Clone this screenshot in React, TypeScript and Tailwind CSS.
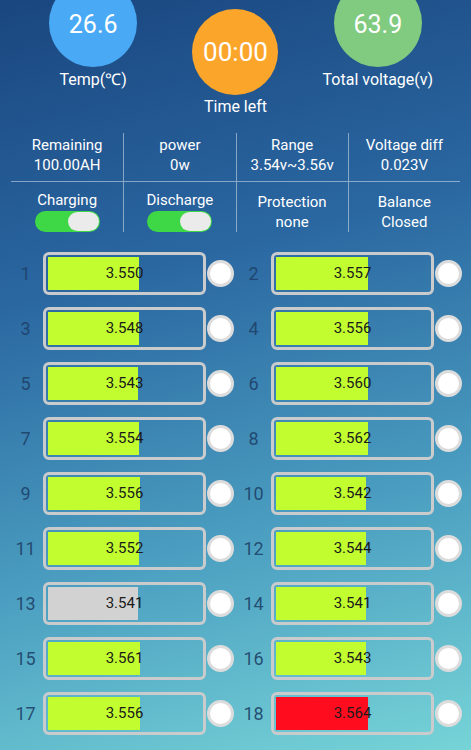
import React from "react";

const cells: { n: number; v: string; c?: string }[] = [
  { n: 1, v: "3.550" },
  { n: 2, v: "3.557" },
  { n: 3, v: "3.548" },
  { n: 4, v: "3.556" },
  { n: 5, v: "3.543" },
  { n: 6, v: "3.560" },
  { n: 7, v: "3.554" },
  { n: 8, v: "3.562" },
  { n: 9, v: "3.556" },
  { n: 10, v: "3.542" },
  { n: 11, v: "3.552" },
  { n: 12, v: "3.544" },
  { n: 13, v: "3.541", c: "gray" },
  { n: 14, v: "3.541" },
  { n: 15, v: "3.561" },
  { n: 16, v: "3.543" },
  { n: 17, v: "3.556" },
  { n: 18, v: "3.564", c: "red" },
];

function Toggle() {
  return (
    <div className="mt-[1px] flex h-[21px] w-[65px] items-center justify-end rounded-full bg-[#3ed846] pr-[1px]">
      <div className="h-[19px] w-[31px] rounded-full bg-[#ebebeb]" />
    </div>
  );
}

function Cell({ n, v, c }: { n: number; v: string; c?: string }) {
  const w = 90 + (parseFloat(v) - 3.541) * 100;
  const fill =
    c === "gray" ? "bg-[#d2d2d2]" : c === "red" ? "bg-[#ff0c1f]" : "bg-[#c2fd2f]";
  return (
    <div className="flex h-[43px] items-center">
      <div className="w-[35px] text-center text-[18px] leading-none text-[#1d4168]/90">{n}</div>
      <div className="relative h-[43px] w-[163px] rounded-[6px] border-[3px] border-[#c9cbcd] p-[2px]">
        <div className={`h-full ${fill}`} style={{ width: `${w}px` }} />
        <div className="absolute inset-0 flex items-center justify-center text-[15px] text-[#1a1a1a]">
          {v}
        </div>
      </div>
      <div className="ml-[1px] h-[27px] w-[27px] rounded-full border-[3px] border-[#dcdcdc] bg-white" />
    </div>
  );
}

export default function App() {
  const info = [
    ["Remaining", "100.00AH"],
    ["power", "0w"],
    ["Range", "3.54v~3.56v"],
    ["Voltage diff", "0.023V"],
  ];
  return (
    <div
      className="h-[750px] w-full overflow-hidden bg-[linear-gradient(165deg,#1a467f_0%,#2a67a1_35%,#4a9dc0_68%,#76d4d7_100%)] text-white"
      style={{ fontFamily: "Roboto, 'Liberation Sans', sans-serif" }}
    >
      {/* top circles */}
      <div className="grid h-[133px] grid-cols-3 px-[22px]">
        <div className="flex flex-col items-center">
          <div className="mt-[-21px] flex h-[88px] w-[88px] items-center justify-center rounded-full bg-[#49a9f5] pt-[4px] text-[25px]">
            26.6
          </div>
          <div className="mt-[3px] text-[16px] leading-[19px]">Temp(℃)</div>
        </div>
        <div className="flex flex-col items-center">
          <div className="mt-[9px] flex h-[86px] w-[86px] items-center justify-center rounded-full bg-[#fca52b] text-[26px]">
            00:00
          </div>
          <div className="mt-[2px] text-[16px] leading-[19px]">Time left</div>
        </div>
        <div className="flex flex-col items-center">
          <div className="mt-[-21px] flex h-[88px] w-[88px] items-center justify-center rounded-full bg-[#80cb7f] pt-[4px] text-[25px]">
            63.9
          </div>
          <div className="mt-[3px] text-[16px] leading-[19px]">Total voltage(v)</div>
        </div>
      </div>

      {/* info table */}
      <div className="mx-[11px]">
        <div className="grid h-[49px] grid-cols-4 border-b border-white/45">
          {info.map(([a, b], i) => (
            <div
              key={a}
              className={`flex flex-col items-center pt-[2px] text-[15px] leading-[20px] ${i > 0 ? "border-l border-white/45" : ""}`}
            >
              <div>{a}</div>
              <div>{b}</div>
            </div>
          ))}
        </div>
        <div className="grid h-[50px] grid-cols-4">
          <div className="flex flex-col items-center pt-[9px] text-[15px] leading-[19px]">
            <div>Charging</div>
            <Toggle />
          </div>
          <div className="flex flex-col items-center border-l border-white/45 pt-[9px] text-[15px] leading-[19px]">
            <div>Discharge</div>
            <Toggle />
          </div>
          <div className="flex flex-col items-center border-l border-white/45 pt-[10px] text-[15px] leading-[20px]">
            <div>Protection</div>
            <div>none</div>
          </div>
          <div className="flex flex-col items-center border-l border-white/45 pt-[10px] text-[15px] leading-[20px]">
            <div>Balance</div>
            <div>Closed</div>
          </div>
        </div>
      </div>

      {/* cells */}
      <div className="mt-[20px] grid grid-cols-2 gap-x-[1px] gap-y-[12px] px-[8px]">
        {cells.map((c) => (
          <Cell key={c.n} {...c} />
        ))}
      </div>
    </div>
  );
}
